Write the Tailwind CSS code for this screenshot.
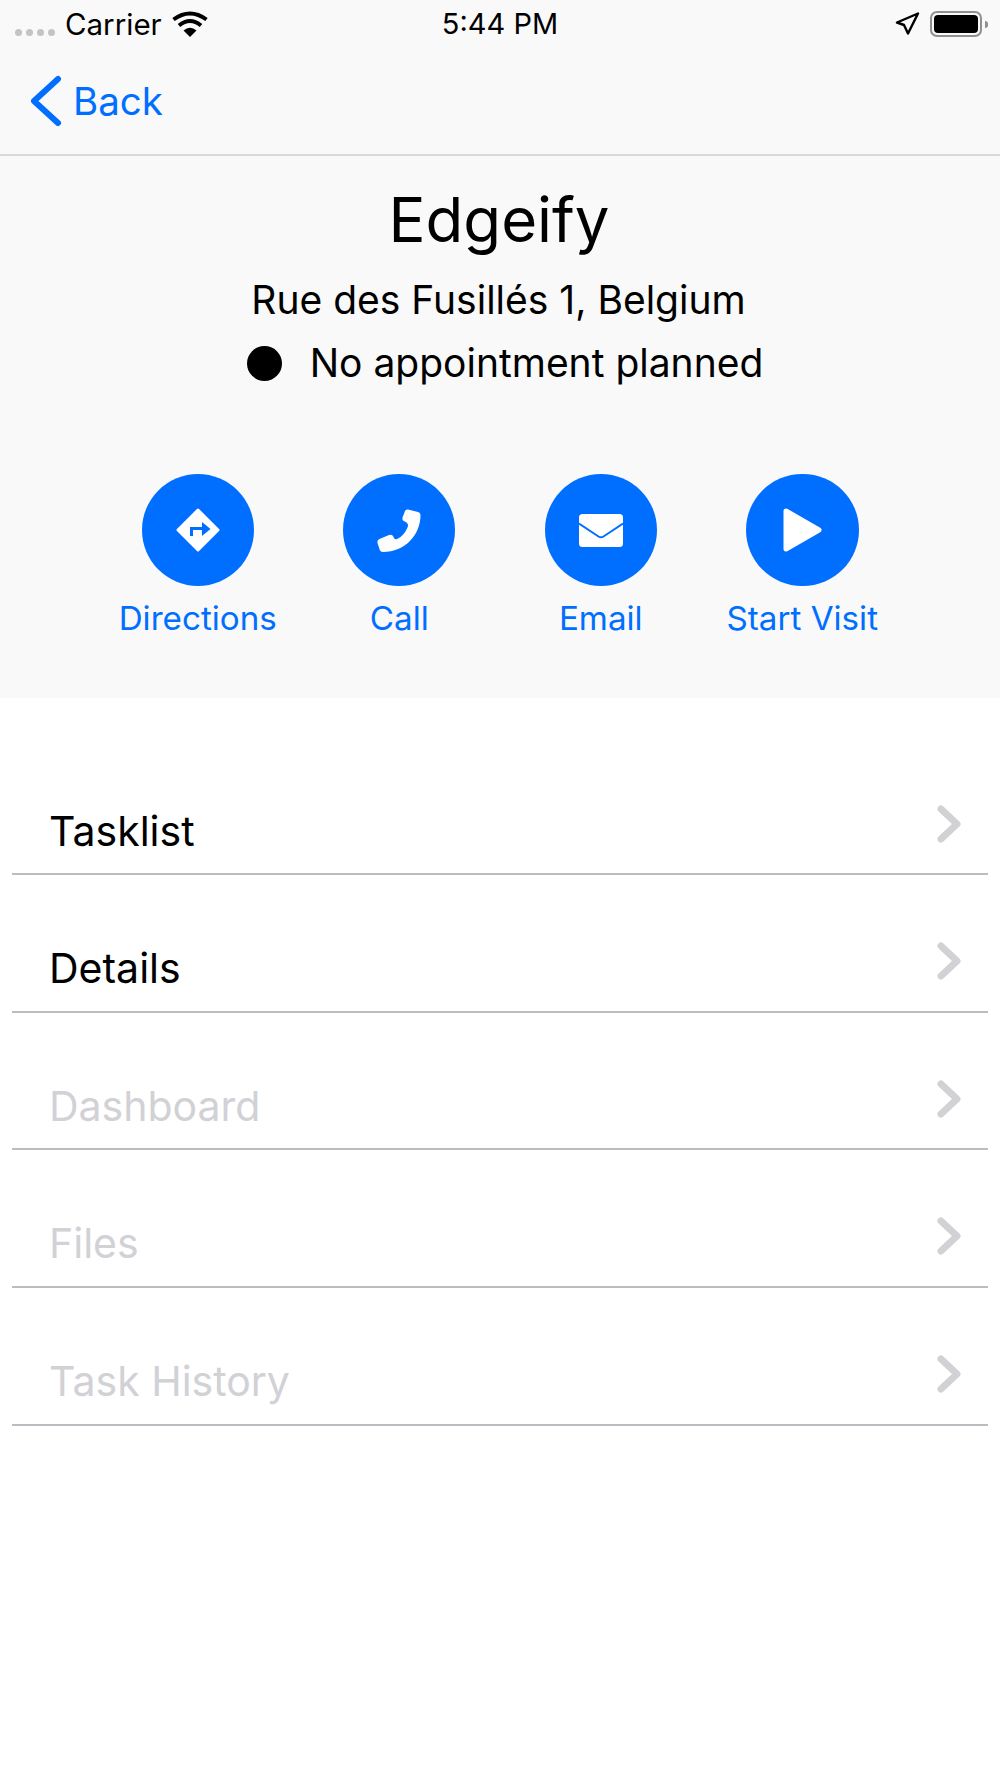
<!DOCTYPE html>
<html lang="en">
<head>
  <meta charset="UTF-8" />
  <title>Edgeify</title>
  <script src="https://cdn.jsdelivr.net/npm/@tailwindcss/browser@4"></script>
</head>
<body class="bg-white text-black font-['Inter',sans-serif]">
  <div class="w-[1000px] h-[1778px] bg-white overflow-hidden">

    <div class="bg-[#f9f9f9]">
      <!-- status bar -->
      <div class="h-[48px] flex items-center justify-between px-[12px]">
        <div class="flex items-center w-[300px]">
          <div class="flex gap-[4px] mt-[17px] ml-[3px]">
            <span class="w-[7px] h-[7px] rounded-full bg-[#c4c4c4]"></span>
            <span class="w-[7px] h-[7px] rounded-full bg-[#c4c4c4]"></span>
            <span class="w-[7px] h-[7px] rounded-full bg-[#c4c4c4]"></span>
            <span class="w-[7px] h-[7px] rounded-full bg-[#c4c4c4]"></span>
          </div>
          <span class="ml-[10px] text-[29.500px]">Carrier</span>
          <svg class="ml-[10px]" width="36" height="26" viewBox="0 0 36 26">
            <path d="M18 26 11.500 19.500Q18 14 24.500 19.500Z" fill="#000"/>
            <path d="M7 14.500Q18 5.500 29 14.500" fill="none" stroke="#000" stroke-width="4"/>
            <path d="M1.500 8.500Q18 -3.500 34.500 8.500" fill="none" stroke="#000" stroke-width="4"/>
          </svg>
        </div>
        <span class="text-[29px]">5:44 PM</span>
        <div class="w-[300px] flex items-center justify-end">
          <svg width="25" height="24" viewBox="0 0 25 24" fill="none" stroke="#000" stroke-width="2.400" stroke-linejoin="round"><path d="M2 10.500 23 1.500 13 21.500 9 13Z"/></svg>
          <div class="ml-[10px] w-[52px] h-[26px] border-2 border-[#909090] rounded-[7px] p-[2px]">
            <div class="h-full bg-black rounded-[4px]"></div>
          </div>
          <div class="ml-[3px] w-[3px] h-[7px] bg-[#909090] rounded-r-full"></div>
        </div>
      </div>

      <!-- nav bar -->
      <div class="h-[108px] border-b-2 border-[#dadada] flex items-center pl-[30px] text-[#006fff] text-[38.500px]">
        <svg width="32" height="52" viewBox="0 0 32 52" fill="none" stroke="#006fff" stroke-width="6" stroke-linecap="round" stroke-linejoin="round"><path d="M28 4 4 26l24 22"/></svg>
        <span class="ml-[11px] mt-[2px]">Back</span>
      </div>

      <!-- hero -->
      <div class="h-[542px] pt-[22px] flex flex-col items-center">
        <h1 class="text-[61.700px] leading-[84px] font-normal -ml-[2px]">Edgeify</h1>
        <p class="text-[39px] leading-[52px] mt-[12px] -ml-[3px]">Rue des Fusillés 1, Belgium</p>
        <div class="flex items-center mt-[11px] text-[39px] leading-[52px] ml-[10px]">
          <span class="w-[35px] h-[35px] rounded-full bg-black"></span>
          <span class="ml-[28px]">No appointment planned</span>
        </div>

        <div class="grid grid-cols-4 w-[806px] mt-[85px] text-[#006fff] text-[33.200px] leading-[44px]">
          <div class="flex flex-col items-center">
            <div class="w-[112px] h-[112px] rounded-full bg-[#006fff] flex items-center justify-center">
              <svg width="44" height="44" viewBox="0 0 44 44">
                <path d="M22 2 42 22 22 42 2 22Z" fill="#fff" stroke="#fff" stroke-width="3" stroke-linejoin="round"/>
                <path d="M15.500 28V20.500H27" fill="none" stroke="#006fff" stroke-width="3"/>
                <path d="M26 14 34.500 21 26 28Z" fill="#006fff"/>
              </svg>
            </div>
            <span class="mt-[10px]">Directions</span>
          </div>
          <div class="flex flex-col items-center">
            <div class="w-[112px] h-[112px] rounded-full bg-[#006fff] flex items-center justify-center">
              <svg width="44" height="44" viewBox="0 0 44 44">
                <path d="M31 1.500 41 4Q43.500 4.500 43.500 7C43.500 27 28 44 6 44Q3 44 2.500 41L.5 35Q0 32 2.500 31L12 27Q14.500 26 16 28L17 30Q18 32 20 31C25 29 29 24 31 18Q31.500 16 29.500 14.500L26 12.500Q25 11 25.500 9.500L28 3Q29 1 31 1.500Z" fill="#fff"/>
              </svg>
            </div>
            <span class="mt-[10px]">Call</span>
          </div>
          <div class="flex flex-col items-center">
            <div class="w-[112px] h-[112px] rounded-full bg-[#006fff] flex items-center justify-center">
              <svg width="44" height="33" viewBox="0 0 44 33">
                <rect width="44" height="33" rx="3.500" fill="#fff"/>
                <path d="M0 9.500 19.500 22.500Q22 24 24.500 22.500L44 9.500" fill="none" stroke="#006fff" stroke-width="2"/>
              </svg>
            </div>
            <span class="mt-[10px]">Email</span>
          </div>
          <div class="flex flex-col items-center">
            <div class="w-[113px] h-[112px] rounded-full bg-[#006fff] flex items-center justify-center">
              <svg width="39" height="44" viewBox="0 0 39 44">
                <path d="M3 3 36 22 3 41Z" fill="#fff" stroke="#fff" stroke-width="5" stroke-linejoin="round"/>
              </svg>
            </div>
            <span class="mt-[10px]">Start Visit</span>
          </div>
        </div>
      </div>
    </div>

    <!-- list -->
    <div class="mt-[39.600px] px-[12px] text-[41px]">
      <div class="h-[137.600px] border-b-2 border-[#bcbbc1] flex justify-between pl-[37px] pr-[27px] pt-[69px]">
        <span class="leading-[48px]">Tasklist</span>
        <svg class="-mt-[2px]" width="24" height="38" viewBox="0 0 24 38" fill="none" stroke="#d1d1d6" stroke-width="7" stroke-linecap="round" stroke-linejoin="round"><path d="M4 4 20 19 4 34"/></svg>
      </div>
      <div class="h-[137.600px] border-b-2 border-[#bcbbc1] flex justify-between pl-[37px] pr-[27px] pt-[69px]">
        <span class="leading-[48px]">Details</span>
        <svg class="-mt-[2px]" width="24" height="38" viewBox="0 0 24 38" fill="none" stroke="#d1d1d6" stroke-width="7" stroke-linecap="round" stroke-linejoin="round"><path d="M4 4 20 19 4 34"/></svg>
      </div>
      <div class="h-[137.600px] border-b-2 border-[#bcbbc1] flex justify-between pl-[37px] pr-[27px] pt-[69px] text-[#d1d1d6]">
        <span class="leading-[48px]">Dashboard</span>
        <svg class="-mt-[2px]" width="24" height="38" viewBox="0 0 24 38" fill="none" stroke="#d1d1d6" stroke-width="7" stroke-linecap="round" stroke-linejoin="round"><path d="M4 4 20 19 4 34"/></svg>
      </div>
      <div class="h-[137.600px] border-b-2 border-[#bcbbc1] flex justify-between pl-[37px] pr-[27px] pt-[69px] text-[#d1d1d6]">
        <span class="leading-[48px]">Files</span>
        <svg class="-mt-[2px]" width="24" height="38" viewBox="0 0 24 38" fill="none" stroke="#d1d1d6" stroke-width="7" stroke-linecap="round" stroke-linejoin="round"><path d="M4 4 20 19 4 34"/></svg>
      </div>
      <div class="h-[137.600px] border-b-2 border-[#bcbbc1] flex justify-between pl-[37px] pr-[27px] pt-[69px] text-[#d1d1d6]">
        <span class="leading-[48px]">Task History</span>
        <svg class="-mt-[2px]" width="24" height="38" viewBox="0 0 24 38" fill="none" stroke="#d1d1d6" stroke-width="7" stroke-linecap="round" stroke-linejoin="round"><path d="M4 4 20 19 4 34"/></svg>
      </div>
    </div>

  </div>
</body>
</html>
